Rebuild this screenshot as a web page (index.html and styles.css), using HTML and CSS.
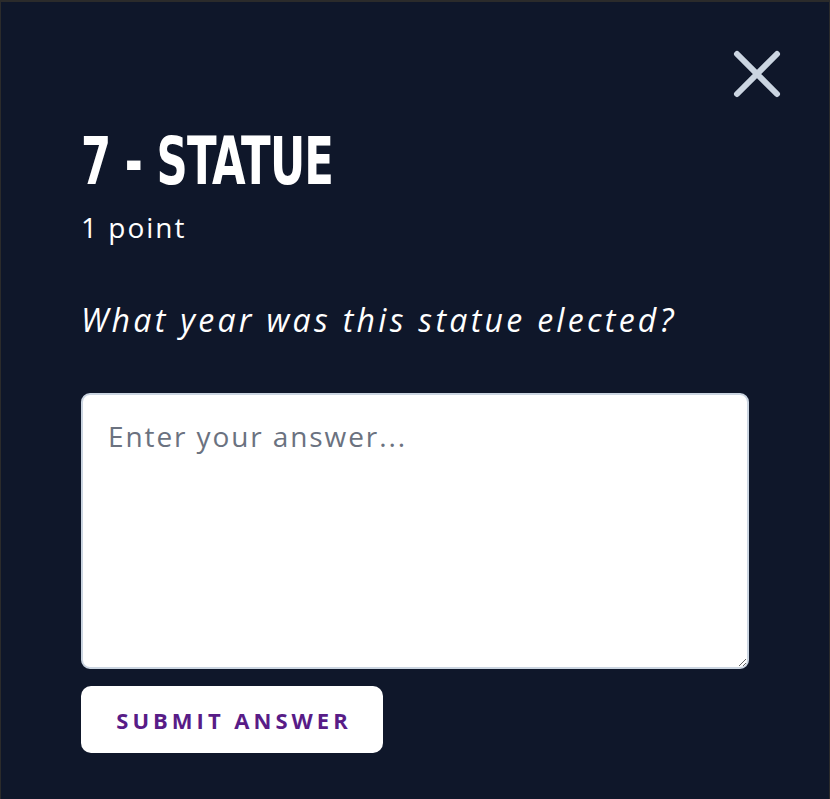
FILE: index.html
```html
<!DOCTYPE html>
<html>
<head>
<meta charset="utf-8">
<link rel="stylesheet" href="styles.css">
</head>
<body>
<div class="modal">
  <div class="topbar">
    <button class="close" aria-label="Close">
      <svg width="48" height="48" viewBox="0 0 48 48"><path d="M4 4 L44 44 M44 4 L4 44" stroke="#cbd5e1" stroke-width="6" stroke-linecap="round" fill="none"/></svg>
    </button>
  </div>
  <div class="content">
    <h1 class="title">7 - STATUE</h1>
    <div class="points">1 point</div>
    <p class="question">What year was this statue elected?</p>
    <textarea class="answer" placeholder="Enter your answer..."></textarea>
    <button class="submit">SUBMIT ANSWER</button>
  </div>
</div>
</body>
</html>
```
FILE: styles.css
```css
html, body {
  margin: 0;
  padding: 0;
  height: 100%;
  background: #0f172a;
}
body {
  font-family: "Open Sans", "Noto Sans", sans-serif;
  color: #ffffff;
}
.modal {
  box-sizing: border-box;
  height: 799px;
  border-top: 2px solid #2b2b2b;
  border-left: 1px solid #2b2b2b;
  border-right: 1px solid #2b2b2b;
  background: #0f172a;
}
.topbar {
  display: flex;
  justify-content: flex-end;
  padding: 48px 48px 0 0;
}
.close {
  background: none;
  border: 0;
  padding: 0;
  width: 48px;
  height: 48px;
  cursor: pointer;
}
.close svg { display: block; }
.content {
  padding: 0 80px 0 80px;
  display: flex;
  flex-direction: column;
  align-items: flex-start;
}
.title {
  margin: 36px 0 0 0;
  font-family: "DejaVu Sans Condensed", "DejaVu Sans", sans-serif;
  font-weight: 700;
  font-size: 66px;
  line-height: 56px;
  letter-spacing: -1px;
  color: #ffffff;
  transform: scaleX(0.73);
  transform-origin: left center;
}
.points {
  margin-top: 19px;
  font-size: 28px;
  line-height: 36px;
  letter-spacing: 2px;
}
.question {
  margin: 55px 0 0 0;
  font-size: 32px;
  font-style: italic;
  line-height: 40px;
  letter-spacing: 3.3px;
}
.answer {
  box-sizing: border-box;
  margin-top: 53px;
  width: 668px;
  height: 276px;
  border: 2px solid #cbd5e1;
  border-radius: 9px;
  background: #ffffff;
  padding: 22px 25px;
  font-family: "Open Sans", "Noto Sans", sans-serif;
  font-size: 28px;
  color: #1f2937;
  resize: vertical;
  outline: none;
}
.answer::placeholder {
  color: #6b7280;
  letter-spacing: 1.9px;
}
.submit {
  margin-top: 17px;
  width: 302px;
  height: 67px;
  background: #ffffff;
  border: 0;
  border-radius: 10px;
  font-family: "Open Sans", "Noto Sans", sans-serif;
  font-weight: 700;
  font-size: 22px;
  letter-spacing: 4px;
  padding: 0 0 0 4px;
  color: #581c87;
  cursor: pointer;
}
```
